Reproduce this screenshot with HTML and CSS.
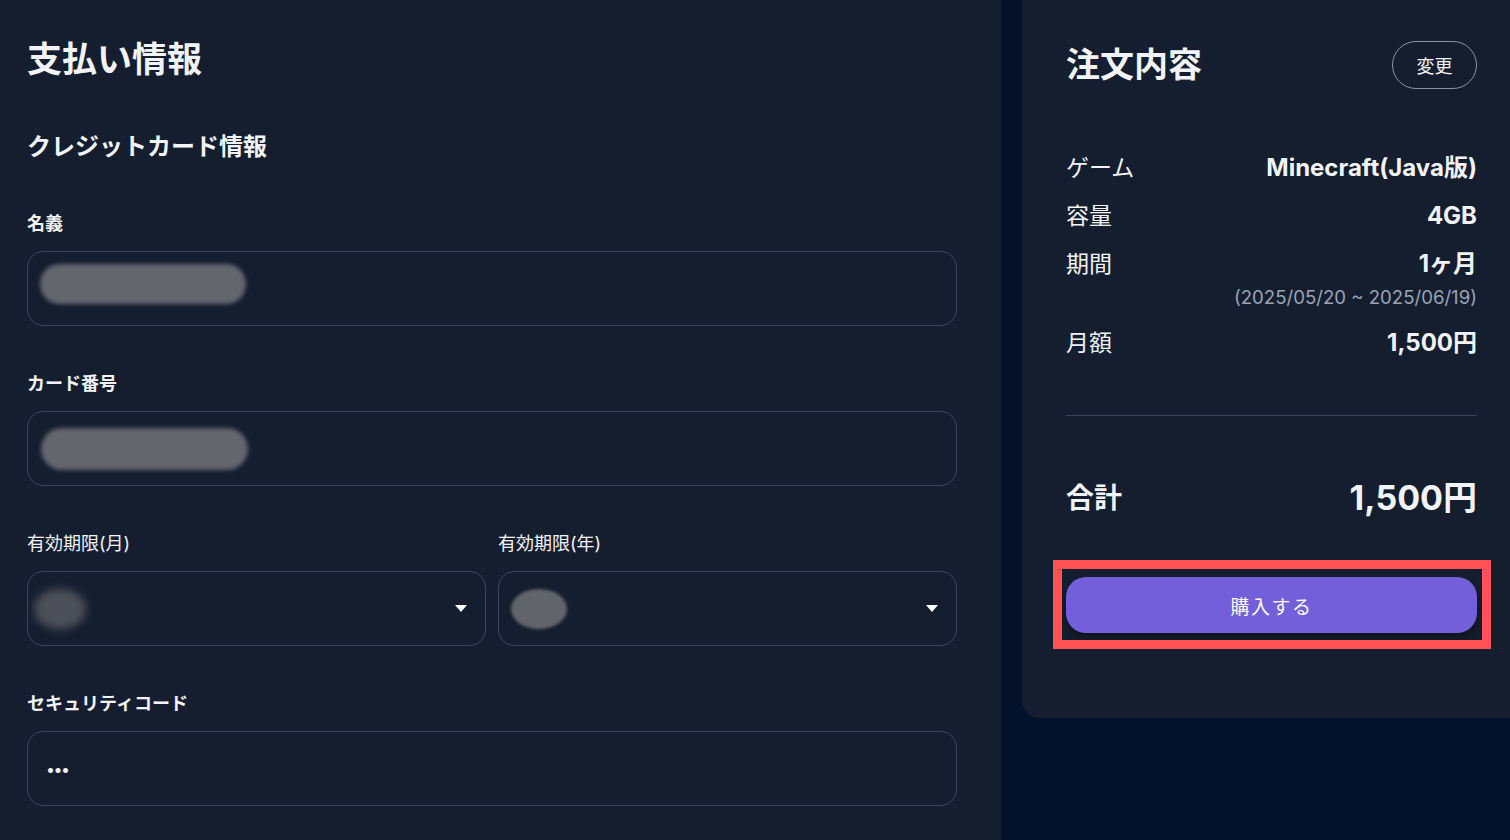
FILE: index.html
```html
<!DOCTYPE html>
<html lang="ja">
<head>
  <meta charset="UTF-8">
  <title>支払い情報</title>
  <link rel="stylesheet" href="styles.css">
</head>
<body>

  <div class="page">
    <section class="payment">
      <h1>支払い情報</h1>
      <h2>クレジットカード情報</h2>

      <div class="field">
        <label>名義</label>
        <div class="input">
          <div class="blur-pill name-pill"></div>
        </div>
      </div>

      <div class="field">
        <label>カード番号</label>
        <div class="input">
          <div class="blur-pill card-pill"></div>
        </div>
      </div>

      <div class="field-row">
        <div class="field">
          <label class="light">有効期限(月)</label>
          <div class="input select">
            <div class="blur-blob month-blob"></div>
            <svg class="arrow" width="12" height="7" viewBox="0 0 12 7"><path d="M0 0h12L6 7z" fill="#fff"/></svg>
          </div>
        </div>
        <div class="field">
          <label class="light">有効期限(年)</label>
          <div class="input select">
            <div class="blur-blob year-blob"></div>
            <svg class="arrow" width="12" height="7" viewBox="0 0 12 7"><path d="M0 0h12L6 7z" fill="#fff"/></svg>
          </div>
        </div>
      </div>

      <div class="field last">
        <label>セキュリティコード</label>
        <div class="input">
          <span class="dots">•••</span>
        </div>
      </div>
    </section>

    <aside class="summary">
      <div class="summary-head">
        <h2 class="summary-title">注文内容</h2>
        <button class="btn-change">変更</button>
      </div>

      <div class="rows">
        <div class="row"><span>ゲーム</span><b>Minecraft(Java版)</b></div>
        <div class="row"><span>容量</span><b>4GB</b></div>
        <div class="row-group">
          <div class="row"><span>期間</span><b>1ヶ月</b></div>
          <div class="period">(2025/05/20 ~ 2025/06/19)</div>
        </div>
        <div class="row"><span>月額</span><b>1,500円</b></div>
      </div>

      <hr class="divider">

      <div class="total">
        <span>合計</span>
        <b>1,500円</b>
      </div>

      <div class="buy-wrap">
        <button class="btn-buy">購入する</button>
        <span class="highlight"></span>
      </div>
    </aside>
  </div>

</body>
</html>
```

FILE: styles.css
```css
body { margin: 0; background: #03112a; font-family: Inter, "Noto Sans CJK JP", sans-serif; color: #f1f3f8; height: 840px; overflow: hidden; }
.page { display: flex; align-items: flex-start; }

/* left: payment form */
.payment { width: 1001px; height: 840px; box-sizing: border-box; padding: 34px 44px 0 27px; background: #151e2f; }
.payment h1 { margin: 0 0 44px; font-size: 35px; line-height: 51px; font-weight: 700; }
.payment h2 { margin: 0 0 45px; font-size: 24px; line-height: 36px; font-weight: 700; }
.field { margin-bottom: 44px; }
.field.last { margin-bottom: 0; }
.field label { display: block; font-size: 18px; line-height: 27px; font-weight: 700; margin-bottom: 14px; }
.field label.light { font-weight: 400; }
.field-row { display: flex; gap: 12px; }
.field-row .field { flex: 1; }
.input { height: 75px; box-sizing: border-box; border: 1px solid #3b4558; border-radius: 16px; display: flex; align-items: center; padding: 0 12px; }
.select { justify-content: space-between; padding: 0 18px 0 2px; }
.blur-pill { background: #64666e; border-radius: 22px; filter: blur(2px); }
.name-pill { width: 206px; height: 40px; margin-top: -10px; }
.card-pill { width: 207px; height: 42px; margin-left: 1px; }
.blur-blob { border-radius: 50%; }
.month-blob { width: 52px; height: 40px; background: #4d5058; filter: blur(4px); margin-left: 4px; }
.year-blob { width: 56px; height: 40px; background: #62646c; filter: blur(1.5px); margin-left: 10px; }
.dots { font-size: 16px; letter-spacing: -1.5px; padding-left: 6px; }

/* right: order summary */
.summary { flex: 1; margin-left: 21px; background: #151e2f; border-radius: 0 0 0 18px; padding: 41px 33px 85px 44px; }
.summary-head { display: flex; justify-content: space-between; align-items: center; margin-bottom: 63px; }
.summary-title { margin: 0; font-size: 34px; line-height: 48px; font-weight: 700; }
.btn-change { width: 85px; height: 48px; border: 1px solid #8b92a1; border-radius: 24px; background: transparent; color: #f1f3f8; font-family: inherit; font-size: 18px; padding-bottom: 2px; }
.rows { display: flex; flex-direction: column; gap: 16px; }
.row { display: flex; justify-content: space-between; align-items: center; font-size: 23px; line-height: 32px; }
.row b { font-size: 24px; font-weight: 700; }
.period { text-align: right; font-size: 18.6px; line-height: 27px; color: #9ba3b7; margin-top: 4px; }
.divider { border: 0; border-top: 1px solid #3a4456; margin: 56px 0 54px; }
.total { display: flex; justify-content: space-between; align-items: center; height: 51px; }
.total span { font-size: 28px; font-weight: 700; }
.total b { font-size: 34px; font-weight: 700; }
.buy-wrap { position: relative; margin-top: 56px; }
.btn-buy { display: block; width: 100%; height: 56px; border: none; border-radius: 20px; background: #735fd9; color: #fff; font-family: inherit; font-size: 19px; letter-spacing: 1.5px; box-shadow: 0 4px 8px rgba(0,0,0,0.4); }
.highlight { position: absolute; top: -17px; left: -13px; right: -14px; bottom: -16px; border: 9px solid #ff5257; pointer-events: none; }
```
